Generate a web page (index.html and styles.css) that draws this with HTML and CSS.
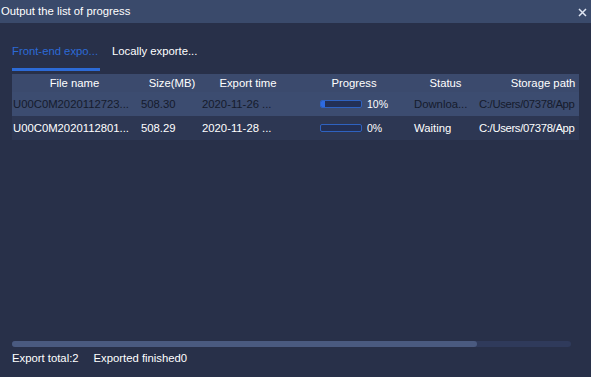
FILE: index.html
```html
<!DOCTYPE html>
<html lang="en">
<head>
  <meta charset="UTF-8">
  <title>Output the list of progress</title>
  <link rel="stylesheet" href="styles.css">
</head>
<body>
  <div class="dialog">
    <div class="title-bar">
      <span class="title">Output the list of progress</span>
      <svg class="close" width="9" height="9" viewBox="0 0 9 9"><path d="M1 1L8 8M8 1L1 8" stroke="#dfe5f2" stroke-width="1.5"/></svg>
    </div>

    <div class="content">
      <div class="tabs">
        <div class="tab active">Front-end expo...</div>
        <div class="tab">Locally exporte...</div>
      </div>

      <div class="table-wrap">
        <table class="list">
          <colgroup>
            <col style="width:125px">
            <col style="width:64px">
            <col style="width:94px">
            <col style="width:118px">
            <col style="width:65px">
            <col style="width:130px">
          </colgroup>
          <thead>
            <tr>
              <th>File name</th>
              <th>Size(MB)</th>
              <th>Export time</th>
              <th>Progress</th>
              <th>Status</th>
              <th>Storage path</th>
            </tr>
          </thead>
          <tbody>
            <tr class="selected">
              <td>U00C0M2020112723...</td>
              <td>508.30</td>
              <td>2020-11-26 ...</td>
              <td><div class="prog"><div class="bar"><div class="fill" style="width:10%"></div></div><span>10%</span></div></td>
              <td>Downloa...</td>
              <td class="path">C:/Users/07378/App</td>
            </tr>
            <tr>
              <td>U00C0M2020112801...</td>
              <td>508.29</td>
              <td>2020-11-28 ...</td>
              <td><div class="prog"><div class="bar"><div class="fill" style="width:0%"></div></div><span>0%</span></div></td>
              <td>Waiting</td>
              <td class="path">C:/Users/07378/App</td>
            </tr>
          </tbody>
        </table>
      </div>

      <div class="hscroll"><div class="thumb"></div></div>

      <div class="footer">
        <span>Export total:2</span>
        <span>Exported finished0</span>
      </div>
    </div>
  </div>
</body>
</html>
```

FILE: styles.css
```css
html, body {
  margin: 0;
  height: 100%;
}
body {
  font-family: "Liberation Sans", Arial, sans-serif;
  font-size: 11.3px;
  background-color: #283049;
  color: #ffffff;
}
.dialog {
  display: flex;
  flex-direction: column;
  height: 377px;
}
.title-bar {
  height: 23px;
  background-color: #3a4a6b;
  display: flex;
  align-items: center;
  justify-content: space-between;
  padding: 0 4px 0 1px;
  flex-shrink: 0;
}
.title {
  color: #ffffff;
  margin-top: -1px;
}
.close {
  margin-top: 1px;
}
.content {
  flex: 1;
  display: flex;
  flex-direction: column;
  padding: 0 20px 0 12px;
}
.tabs {
  display: flex;
  gap: 12px;
  margin-top: 20px;
  height: 28px;
}
.tab {
  color: #ffffff;
  padding-top: 2px;
  box-sizing: border-box;
  height: 28px;
  white-space: nowrap;
}
.tab.active {
  color: #2c6ad6;
  width: 88px;
  border-bottom: 3px solid #2c6ad6;
}
.table-wrap {
  margin-top: 3px;
  width: 567px;
  overflow: hidden;
  flex: 1;
}
.list {
  table-layout: fixed;
  border-collapse: collapse;
  width: 596px;
}
.list th {
  background-color: #3b4a6d;
  font-weight: normal;
  height: 18px;
  padding: 0;
  text-align: center;
  color: #ffffff;
}
.list td {
  height: 24px;
  padding: 0 0 0 1px;
  white-space: nowrap;
  overflow: hidden;
  background-color: #2d3753;
  color: #ffffff;
}
.list th:nth-child(2) { padding-left: 6px; }
.list tr.selected td {
  background-color: #3c4c70;
  color: #151b2c;
}
.list td:nth-child(2) { padding-left: 4px; }
.list td.path {
  letter-spacing: -0.35px;
}
.prog {
  display: flex;
  align-items: center;
  padding-left: 24px;
  gap: 5px;
}
.bar {
  width: 40px;
  height: 6px;
  border: 1px solid #2e62c0;
  background-color: #233055;
  border-radius: 2px;
  overflow: hidden;
}
.fill {
  height: 100%;
  background-color: #2e6be0;
}
.prog span {
  font-size: 10.5px;
  color: #ffffff;
}
.hscroll {
  height: 6px;
  width: 559px;
  background-color: #2f3a5b;
  border-radius: 3px;
  flex-shrink: 0;
}
.thumb {
  width: 465px;
  height: 100%;
  background-color: #4a5a80;
  border-radius: 3px;
}
.footer {
  display: flex;
  gap: 15px;
  height: 30px;
  padding-top: 5px;
  box-sizing: border-box;
  flex-shrink: 0;
}
```
